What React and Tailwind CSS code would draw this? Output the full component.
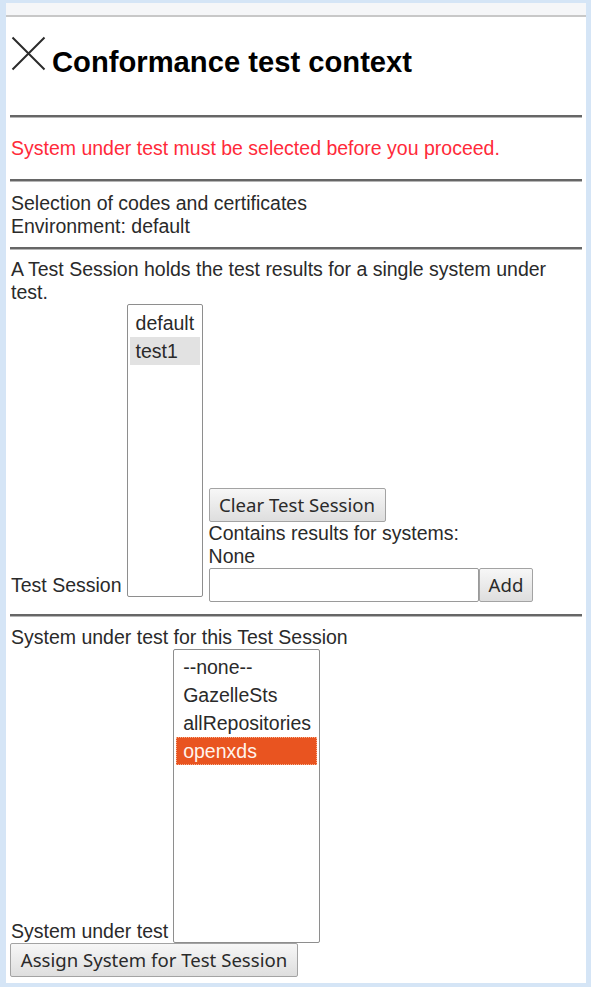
import React from "react";

const Hr = () => (
  <div className="mx-[-1px] h-[3px] border-t-2 border-t-[#666] border-b border-b-[#b5b5b5]" />
);

const Btn = ({ children, className = "" }) => (
  <button
    className={
      "h-[34px] rounded-[2px] border border-[#a3a3a3] bg-gradient-to-b from-[#f7f7f7] to-[#dedede] px-[9px] text-[18.6px] leading-none text-[#2a2a2a] " +
      className
    }
    style={{ fontFamily: '"Noto Sans", "Open Sans", sans-serif' }}
  >
    {children}
  </button>
);

export default function App() {
  return (
    <div
      className="min-h-screen bg-[#d5e5f6] pt-[3px] pl-[6px] pr-[5px] pb-[4px] text-[19.5px] leading-[23px] text-[#2a2a2a]"
      style={{ fontFamily: '"Liberation Sans", Arial, sans-serif' }}
    >
      <div className="flex flex-col bg-white">
        <div className="h-[14px] border-b-2 border-b-[#c8c8c8] bg-[#f5f6f8]" />
        <div className="px-[5px]">
          {/* Title */}
          <div className="flex items-start pt-[19px] pb-[37px]">
            <svg width="35" height="35" viewBox="0 0 35 35" className="shrink-0">
              <path d="M1.5 1.5 L33.5 33.5 M33.5 1.5 L1.5 33.5" stroke="#2b2b2b" strokeWidth="2" fill="none" />
            </svg>
            <h2 className="ml-[6px] mt-[10px] text-[29.2px] font-bold leading-[32px] text-black">
              Conformance test context
            </h2>
          </div>
          <Hr />
          <div className="pt-[19px] pb-[19px] text-[#ff2a3a]">
            System under test must be selected before you proceed.
          </div>
          <Hr />
          <div className="pt-[10px] pb-[9px]">
            <div>Selection of codes and certificates</div>
            <div>Environment: default</div>
          </div>
          <Hr />
          <div className="pt-[8px] pb-[12px]">
            <div>A Test Session holds the test results for a single system under test.</div>
            <div className="flex items-end">
              <div className="mb-[5px]">Test Session</div>
              <div className="mb-[5px] ml-[5px] h-[293px] w-[76px] rounded-[2px] border border-[#8e8e8e] px-[2px] py-[4px]">
                <div className="h-[28px] pl-[6px] leading-[28px]">default</div>
                <div className="h-[28px] bg-[#e2e2e2] pl-[6px] leading-[28px]">test1</div>
              </div>
              <div className="ml-[6px] flex flex-col items-start">
                <Btn className="w-[177px]">Clear Test Session</Btn>
                <div>Contains results for systems:</div>
                <div>None</div>
                <div className="flex">
                  <div className="h-[34px] w-[270px] rounded-[2px] border border-[#9a9a9a] bg-white" />
                  <Btn className="w-[54px] px-0">Add</Btn>
                </div>
              </div>
            </div>
          </div>
          <Hr />
          <div className="pt-[9px] pb-[6px]">
            <div>System under test for this Test Session</div>
            <div className="flex items-end">
              <div>System under test</div>
              <div className="ml-[5px] h-[294px] w-[147px] rounded-[2px] border border-[#8e8e8e] px-[2px] py-[3px]">
                <div className="h-[28px] pl-[7px] leading-[28px]">--none--</div>
                <div className="h-[28px] pl-[7px] leading-[28px]">GazelleSts</div>
                <div className="h-[28px] pl-[7px] leading-[28px]">allRepositories</div>
                <div className="h-[28px] border border-dotted border-[#f7b08f] bg-[#e95420] pl-[6px] leading-[26px] text-[#fff3ec]">
                  openxds
                </div>
              </div>
            </div>
            <Btn className="-ml-[1px] w-[288px]">Assign System for Test Session</Btn>
          </div>
        </div>
      </div>
    </div>
  );
}
